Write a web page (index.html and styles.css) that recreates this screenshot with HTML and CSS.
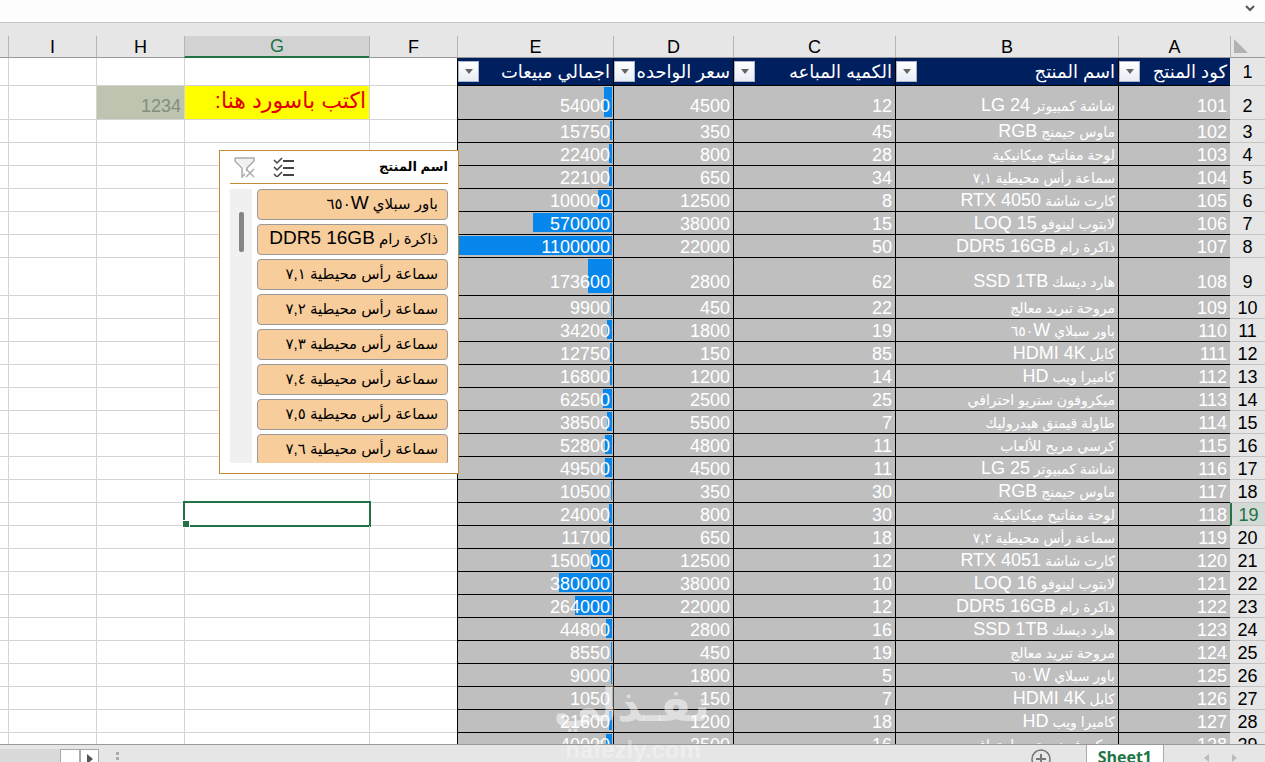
FILE: index.html
```
<!DOCTYPE html>
<html lang="ar">
<head>
	<meta charset="UTF-8">
	<meta name="viewport" content="width=device-width, initial-scale=1.0">
	<title>Sheet1</title>
	<link rel="stylesheet" href="styles.css">
</head>
<body>
	<div class="app" dir="rtl">
		<div class="formula-bar">
			<button class="expand" aria-label="توسيع شريط الصيغة">
				<svg width="10" height="8" viewBox="0 0 10 8"><path d="M1 2l4 4 4-4" fill="none" stroke="#555" stroke-width="2"/></svg>
			</button>
		</div>
		<main class="sheet">
			<table class="grid">
				<colgroup>
					<col class="c-head"><col class="c-a"><col class="c-b"><col class="c-c"><col class="c-d">
					<col class="c-e"><col class="c-f"><col class="c-g"><col class="c-h"><col class="c-i"><col>
				</colgroup>
				<thead>
					<tr>
						<th class="corner"><svg width="14" height="14" viewBox="0 0 14 14"><path d="M0 0v14h14z" fill="#b2b2b2"/></svg></th>
						<th>A</th><th>B</th><th>C</th><th>D</th><th>E</th><th>F</th><th class="active">G</th><th>H</th><th>I</th><th></th>
					</tr>
				</thead>
				<tbody id="rows"></tbody>
			</table>
			<section class="slicer">
				<header class="slicer-head">
					<h2>اسم المنتج</h2>
					<button aria-label="تحديد متعدد">
						<svg width="22" height="20" viewBox="0 0 22 20" fill="none" stroke="#444" stroke-width="2">
							<path d="M10 4h11M10 11h11M10 18h11" />
							<path d="M1 3l3 3 5-5M1 10l3 3 5-5M1 17l3 3 5-5" stroke-width="1.5"/>
						</svg>
					</button>
					<button aria-label="مسح التصفية">
						<svg width="22" height="21" viewBox="0 0 22 21" fill="none" stroke="#aaa" stroke-width="1.5">
							<path d="M1 1h19v3l-7 7v3M1 1v3l7 7v9l3-3" fill="#f1f1f1"/>
							<path d="M12 12l8 8M20 12l-8 8"/>
						</svg>
					</button>
				</header>
				<div class="slicer-body">
					<div class="slicer-list" id="slicer"></div>
					<div class="track"><div class="thumb"></div></div>
				</div>
			</section>
		</main>
		<footer class="tabs">
			<button class="nav" aria-label="السابق"><svg width="6" height="8" viewBox="0 0 6 8"><path d="M0 0v8l5-4z" fill="#bbb"/></svg></button>
			<button class="nav" aria-label="التالي"><svg width="6" height="8" viewBox="0 0 6 8"><path d="M5 0v8L0 4z" fill="#bbb"/></svg></button>
			<button class="tab">Sheet1</button>
			<button class="add" aria-label="ورقة جديدة">
				<svg width="20" height="20" viewBox="0 0 20 20" fill="none" stroke="#777"><circle cx="10" cy="10" r="9" stroke-width="1.5"/><path d="M10 5v10M5 10h10" stroke-width="2"/></svg>
			</button>
			<span class="dots"><i></i><i></i></span>
			<div class="hscroll">
				<button aria-label="تمرير"><svg width="6" height="10" viewBox="0 0 6 10"><path d="M0 0v10l6-5z" fill="#555"/></svg></button>
				<div class="hthumb"></div>
				<div class="htrack"></div>
			</div>
		</footer>
		<div class="watermark" aria-hidden="true">
			<b>نفـذلي</b>
			<span>nafezly.com</span>
		</div>
	</div>
	<script src="script.js"></script>
</body>
</html>
```
FILE: styles.css
```
* {
	box-sizing: border-box;
}
body {
	margin: 0;
	font: 18px/20px "Liberation Sans", "DejaVu Sans", sans-serif;
	color: #000;
}
button {
	font: inherit;
	color: inherit;
	background: none;
	border: 0;
	padding: 0;
}
svg {
	display: block;
}
.app {
	position: relative;
	display: flex;
	flex-direction: column;
	height: 100vh;
	overflow: hidden;
	background: #e6e6e6;
}
.formula-bar {
	flex: none;
	display: flex;
	height: 23px;
	margin-bottom: 13px;
	padding: 4px 10px;
	background: #fdfdfd;
	border-bottom: 1px solid #c6c6c6;
}
.expand {
	height: 8px;
}

/* grid */
.sheet {
	position: relative;
	flex: 1;
	min-height: 0;
	overflow: hidden;
	background: #fff;
}
.grid {
	width: 100%;
	table-layout: fixed;
	border-collapse: separate;
	border-spacing: 0;
}
.c-head { width: 35px; }
.c-a { width: 112px; }
.c-b { width: 223px; }
.c-c { width: 162px; }
.c-d { width: 120px; }
.c-e { width: 156px; }
.c-f { width: 88px; }
.c-g { width: 185px; }
.c-h { width: 88px; }
.c-i { width: 88px; }

.grid th {
	padding: 0;
	font-weight: normal;
	background: #e6e6e6;
}
.grid thead th {
	height: 22px;
	border-left: 1px solid #b5b5b5;
	border-bottom: 1px solid #999;
}
.grid thead .active {
	color: #217346;
	background: #d2d2d2;
	border-bottom: 2px solid #217346;
}
.grid thead .corner {
	padding: 3px 0 0;
	vertical-align: top;
}
.corner svg {
	margin-right: auto;
	margin-left: 3px;
}
.grid tbody tr {
	height: 23px;
}
.grid tbody .row-1 {
	height: 28px;
}
.grid tbody .row-2 {
	height: 34px;
}
.grid tbody .row-9 {
	height: 38px;
}
.grid tbody th {
	vertical-align: bottom;
	border-bottom: 1px solid #c4c4c4;
}
.grid .row-1 th {
	vertical-align: middle;
}
.grid tbody th.active {
	color: #217346;
	background: #d3d9d5;
	border-left: 2px solid #217346;
}
.grid td {
	position: relative;
	padding: 0 3px;
	white-space: nowrap;
	text-align: right;
	vertical-align: bottom;
	border-left: 1px solid #d4d4d4;
	border-bottom: 1px solid #d4d4d4;
}
.grid .row-2 > *,
.grid .row-9 > * {
	padding-bottom: 3px;
}
.grid tr > :last-child {
	border-left: 0;
}
.grid td.data {
	color: #fff;
	background: #bfbfbf;
	border-color: #000;
}
.grid td.title {
	color: #fff;
	background: #001f5f;
	border-color: #000;
	vertical-align: middle;
}
.title div {
	display: flex;
	align-items: center;
	justify-content: space-between;
	margin-left: -3px;
}
.filter {
	flex: none;
	display: flex;
	align-items: center;
	justify-content: center;
	width: 21px;
	height: 21px;
	background: linear-gradient(#fff, #e8ecf4);
	border: 1px solid #a9b4c8;
}
.data .ar {
	font-size: 14px;
}
.bar {
	position: absolute;
	top: 1px;
	bottom: 2px;
	right: 1px;
	background: #0787ec;
}
.value {
	position: relative;
}
.grid td.ask {
	color: #e00000;
	background: #ff0;
	font-size: 22px;
	vertical-align: middle;
}
.grid td.password {
	color: #848c7c;
	background: #bdc5b1;
}
.selected::after {
	content: "";
	position: absolute;
	inset: -2px -2px -2px -2px;
	border: 2px solid #217346;
}
.selected::before {
	content: "";
	position: absolute;
	left: -3px;
	bottom: -3px;
	width: 6px;
	height: 6px;
	background: #217346;
	border: 1px solid #fff;
	z-index: 1;
}

/* slicer */
.slicer {
	position: absolute;
	top: 114px;
	right: 806px;
	width: 240px;
	height: 324px;
	padding: 0 10px;
	background: #fff;
	border: 1px solid #c48a35;
}
.slicer-head {
	display: flex;
	align-items: center;
	gap: 17px;
	height: 33px;
	padding-left: 4px;
	border-bottom: 1px solid #c48a35;
}
.slicer-head h2 {
	flex: 1;
	margin: 0;
	font-size: 13px;
}
.slicer-body {
	display: flex;
	gap: 5px;
	height: 274px;
	margin-top: 5px;
}
.slicer-list {
	flex: 1;
	display: flex;
	flex-direction: column;
	gap: 4px;
	overflow: hidden;
}
.slicer-list button {
	flex: none;
	height: 31px;
	padding: 0 9px 2px;
	font-size: 19px;
	text-align: right;
	white-space: nowrap;
	background: #f8cd9c;
	border: 1px solid #999;
	border-radius: 4px;
}
.slicer-list .ar {
	font-size: 15px;
}
.track {
	width: 22px;
	padding-top: 23px;
	background: #f0f0f0;
}
.thumb {
	width: 5px;
	height: 40px;
	margin: 0 auto;
	background: #858585;
	border-radius: 2px;
}

/* sheet tabs */
.tabs {
	flex: none;
	display: flex;
	align-items: flex-start;
	height: 18px;
	overflow: hidden;
	border-top: 1px solid #999;
}
.nav {
	margin: 9px 27px 0 -5px;
}
.tab {
	height: 24px;
	margin-right: 45px;
	padding: 0 11px;
	font: bold 16px/20px "Open Sans", sans-serif;
	color: #217346;
	background: #fff;
	border: 1px solid #aaa;
	border-top: 0;
}
.add {
	margin: 4px 35px 0 0;
}
.dots {
	display: grid;
	gap: 2px;
	margin: 7px auto 0 17px;
}
.dots i {
	width: 3px;
	height: 3px;
	background: #aaa;
}
.hscroll {
	display: flex;
	height: 20px;
	margin-top: 4px;
}
.hscroll button {
	width: 19px;
	padding-right: 5px;
	background: #fff;
	border: 1px solid #aaa;
}
.hthumb {
	width: 20px;
	background: #fff;
	border: 1px solid #aaa;
}
.htrack {
	width: 60px;
	background: #d9d9d9;
}

.watermark {
	position: absolute;
	bottom: 2px;
	right: 555px;
	width: 154px;
	text-align: center;
	white-space: nowrap;
	color: rgba(255, 255, 255, .5);
	pointer-events: none;
}
.watermark b {
	display: block;
	font-size: 46px;
	line-height: 70px;
}
.watermark span {
	display: block;
	font-size: 24px;
	font-weight: bold;
	color: rgba(255, 255, 255, .35);
}
```
FILE: script.js
```
const titles = ['كود المنتج', 'اسم المنتج', 'الكميه المباعه', 'سعر الواحده', 'اجمالي مبيعات'];

// name, quantity, unit price, total
const products = [
	['شاشة كمبيوتر LG 24', 12, 4500, 54000],
	['ماوس جيمنج RGB', 45, 350, 15750],
	['لوحة مفاتيح ميكانيكية', 28, 800, 22400],
	['سماعة رأس محيطية ٧,١', 34, 650, 22100],
	['كارت شاشة RTX 4050', 8, 12500, 100000],
	['لابتوب لينوفو LOQ 15', 15, 38000, 570000],
	['ذاكرة رام DDR5 16GB', 50, 22000, 1100000],
	['هارد ديسك SSD 1TB', 62, 2800, 173600],
	['مروحة تبريد معالج', 22, 450, 9900],
	['باور سبلاي ٦٥٠W', 19, 1800, 34200],
	['كابل HDMI 4K', 85, 150, 12750],
	['كاميرا ويب HD', 14, 1200, 16800],
	['ميكروفون ستريو احترافي', 25, 2500, 62500],
	['طاولة قيمنق هيدروليك', 7, 5500, 38500],
	['كرسي مريح للألعاب', 11, 4800, 52800],
	['شاشة كمبيوتر LG 25', 11, 4500, 49500],
	['ماوس جيمنج RGB', 30, 350, 10500],
	['لوحة مفاتيح ميكانيكية', 30, 800, 24000],
	['سماعة رأس محيطية ٧,٢', 18, 650, 11700],
	['كارت شاشة RTX 4051', 12, 12500, 150000],
	['لابتوب لينوفو LOQ 16', 10, 38000, 380000],
	['ذاكرة رام DDR5 16GB', 12, 22000, 264000],
	['هارد ديسك SSD 1TB', 16, 2800, 44800],
	['مروحة تبريد معالج', 19, 450, 8550],
	['باور سبلاي ٦٥٠W', 5, 1800, 9000],
	['كابل HDMI 4K', 7, 150, 1050],
	['كاميرا ويب HD', 18, 1200, 21600],
	['ميكروفون ستريو احترافي', 16, 2500, 40000]
];

const slicerItems = [
	'باور سبلاي ٦٥٠W',
	'ذاكرة رام DDR5 16GB',
	'سماعة رأس محيطية ٧,١',
	'سماعة رأس محيطية ٧,٢',
	'سماعة رأس محيطية ٧,٣',
	'سماعة رأس محيطية ٧,٤',
	'سماعة رأس محيطية ٧,٥',
	'سماعة رأس محيطية ٧,٦'
];

const max = Math.max(...products.map(p => p[3]));
const arrow = '<svg width="8" height="5" viewBox="0 0 8 5"><path d="M0 0h8L4 5z" fill="#666"/></svg>';

// Arabic runs are set a little smaller than the Latin ones
function label(text) {
	return text.replace(/[\u0600-\u06ff][\u0600-\u06ff ,]*/g, '<span class="ar">$&</span>');
}

function side(row) {
	if (row === 2) {
		return '<td></td><td class="ask">اكتب باسورد هنا:</td><td class="password">1234</td><td></td><td></td>';
	}
	return '<td></td><td' + (row === 19 ? ' class="selected"' : '') + '></td><td></td><td></td><td></td>';
}

let html = '<tr class="row-1"><th>1</th>';
titles.forEach(t => {
	html += `<td class="title"><div>${t}<button class="filter" aria-label="تصفية ${t}">${arrow}</button></div></td>`;
});
html += side(1) + '</tr>';

products.forEach(([name, qty, price, total], i) => {
	const row = i + 2;
	html += `<tr class="row-${row}"><th${row === 19 ? ' class="active"' : ''}>${row}</th>
		<td class="data">${101 + i}</td>
		<td class="data">${label(name)}</td>
		<td class="data">${qty}</td>
		<td class="data">${price}</td>
		<td class="data"><div class="bar" style="width: ${total / max * 99}%"></div><span class="value">${total}</span></td>
		${side(row)}</tr>`;
});
document.querySelector('#rows').innerHTML = html;

document.querySelector('#slicer').innerHTML = slicerItems
	.map(name => `<button>${label(name)}</button>`)
	.join('');
```
